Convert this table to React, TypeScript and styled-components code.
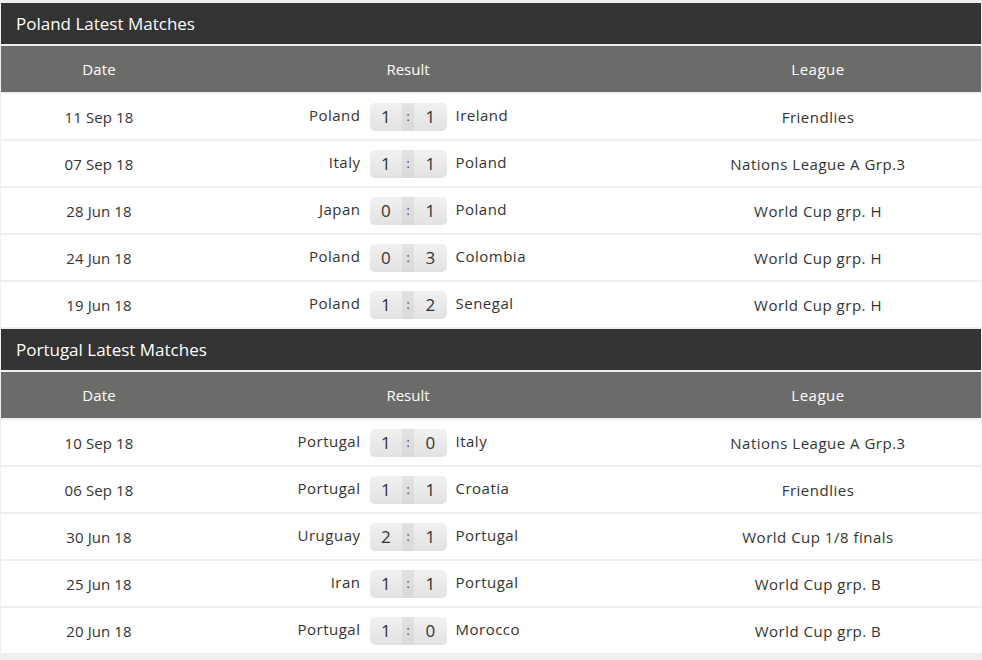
import { FC } from 'react'
import styled, { createGlobalStyle } from 'styled-components'

type Match = {
  date: string
  home: string
  away: string
  hs: number
  as: number
  league: string
}

const poland: Match[] = [
  { date: '11 Sep 18', home: 'Poland', away: 'Ireland', hs: 1, as: 1, league: 'Friendlies' },
  { date: '07 Sep 18', home: 'Italy', away: 'Poland', hs: 1, as: 1, league: 'Nations League A Grp.3' },
  { date: '28 Jun 18', home: 'Japan', away: 'Poland', hs: 0, as: 1, league: 'World Cup grp. H' },
  { date: '24 Jun 18', home: 'Poland', away: 'Colombia', hs: 0, as: 3, league: 'World Cup grp. H' },
  { date: '19 Jun 18', home: 'Poland', away: 'Senegal', hs: 1, as: 2, league: 'World Cup grp. H' },
]

const portugal: Match[] = [
  { date: '10 Sep 18', home: 'Portugal', away: 'Italy', hs: 1, as: 0, league: 'Nations League A Grp.3' },
  { date: '06 Sep 18', home: 'Portugal', away: 'Croatia', hs: 1, as: 1, league: 'Friendlies' },
  { date: '30 Jun 18', home: 'Uruguay', away: 'Portugal', hs: 2, as: 1, league: 'World Cup 1/8 finals' },
  { date: '25 Jun 18', home: 'Iran', away: 'Portugal', hs: 1, as: 1, league: 'World Cup grp. B' },
  { date: '20 Jun 18', home: 'Portugal', away: 'Morocco', hs: 1, as: 0, league: 'World Cup grp. B' },
]

const MatchTable: FC<{ title: string; matches: Match[] }> = ({ title, matches }) => (
  <>
    <Title>{title}</Title>
    <HeadRow>
      <DateCell>Date</DateCell>
      <ResultCell>Result</ResultCell>
      <LeagueCell>League</LeagueCell>
    </HeadRow>
    {matches.map((m, i) => (
      <Row key={i}>
        <DateCell>{m.date}</DateCell>
        <ResultCell>
          <Team side='home'>{m.home}</Team>
          <Score>
            <Goal>{m.hs}</Goal>
            <Colon>:</Colon>
            <Goal>{m.as}</Goal>
          </Score>
          <Team side='away'>{m.away}</Team>
        </ResultCell>
        <LeagueCell>{m.league}</LeagueCell>
      </Row>
    ))}
  </>
)

export default function App() {
  return (
    <>
      <GlobalStyle />
      <Page>
        <MatchTable title='Poland Latest Matches' matches={poland} />
        <MatchTable title='Portugal Latest Matches' matches={portugal} />
      </Page>
    </>
  )
}

const GlobalStyle = createGlobalStyle`
  body {
    margin: 0;
    background: #efefef;
    font-family: 'Open Sans', 'Noto Sans', sans-serif;
    color: #333;
  }
`

const Page = styled.div`
  display: flex;
  flex-direction: column;
  gap: 2px;
  padding: 3px 1px 0;
`

const Title = styled.div`
  height: 41px;
  display: flex;
  align-items: center;
  padding-left: 15px;
  background: #333333;
  color: #fff;
  font-size: 17px;
`

const gridCols = `
  display: grid;
  grid-template-columns: 196px 422px 1fr;
  align-items: center;
`

const HeadRow = styled.div`
  ${gridCols}
  height: 46px;
  background: #6b6c69;
  color: #fff;
  font-size: 15px;
`

const Row = styled.div`
  ${gridCols}
  height: 45px;
  background: #fff;
  font-size: 15px;
  color: #333;
`

const DateCell = styled.div`
  text-align: center;
  letter-spacing: 0.1px;
`

const ResultCell = styled.div`
  display: flex;
  align-items: center;
  justify-content: center;
  gap: 9px;
`

const LeagueCell = styled.div`
  text-align: center;
  padding-left: 36px;
  letter-spacing: 0.5px;
`

const Team = styled.div<{ side: 'home' | 'away' }>`
  flex: 1;
  text-align: ${(p) => (p.side === 'home' ? 'right' : 'left')};
  margin-top: -3px;
  letter-spacing: 0.5px;
`

const Score = styled.div`
  display: flex;
  align-items: stretch;
  width: 77px;
  height: 28px;
  border-radius: 5px;
  overflow: hidden;
  background: linear-gradient(#f1f1f1, #e2e2e2);
  font-size: 17px;
`

const Goal = styled.div`
  flex: 1;
  display: flex;
  align-items: center;
  justify-content: center;
`

const Colon = styled.div`
  width: 12px;
  display: flex;
  align-items: center;
  justify-content: center;
  background: linear-gradient(#e2e2e2, #d9d9d9);
  font-size: 12px;
`
